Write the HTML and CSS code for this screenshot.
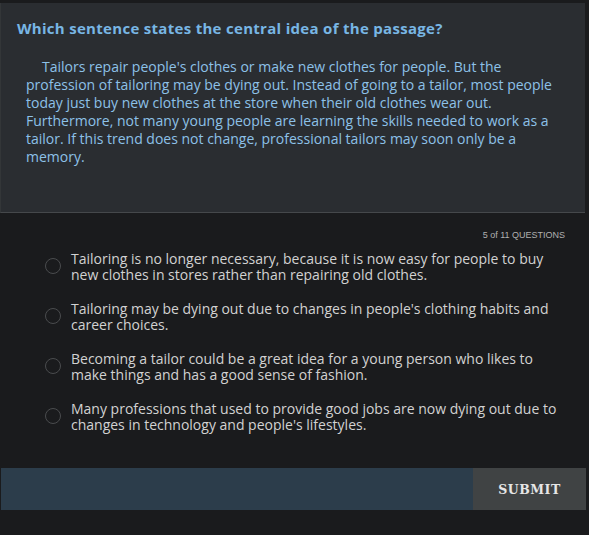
FILE: index.html
```html
<!DOCTYPE html>
<html>
<head>
<meta charset="utf-8">
<link rel="stylesheet" href="styles.css">
</head>
<body>
<div class="page">
  <section class="passage">
    <h1 class="title">Which sentence states the central idea of the passage?</h1>
    <p class="text">Tailors repair people's clothes or make new clothes for people. But the profession of tailoring may be dying out. Instead of going to a tailor, most people today just buy new clothes at the store when their old clothes wear out. Furthermore, not many young people are learning the skills needed to work as a tailor. If this trend does not change, professional tailors may soon only be a memory.</p>
  </section>
  <div class="counter">5 of 11 QUESTIONS</div>
  <ul class="options">
    <li class="option"><span class="radio"></span><span class="label">Tailoring is no longer necessary, because it is now easy for people to buy new clothes in stores rather than repairing old clothes.</span></li>
    <li class="option"><span class="radio"></span><span class="label">Tailoring may be dying out due to changes in people's clothing habits and career choices.</span></li>
    <li class="option"><span class="radio"></span><span class="label">Becoming a tailor could be a great idea for a young person who likes to make things and has a good sense of fashion.</span></li>
    <li class="option"><span class="radio"></span><span class="label">Many professions that used to provide good jobs are now dying out due to changes in technology and people's lifestyles.</span></li>
  </ul>
  <div class="bar">
    <div class="bar-fill"></div>
    <button class="submit">SUBMIT</button>
  </div>
</div>
</body>
</html>
```
FILE: styles.css
```css
html, body {
  margin: 0;
  padding: 0;
  background: #1a1b1d;
  height: 100%;
}
.page {
  width: 589px;
  height: 535px;
  padding-top: 3px;
  box-sizing: border-box;
  font-family: "Open Sans", "Noto Sans", sans-serif;
}
.passage {
  width: 585px;
  height: 210px;
  box-sizing: border-box;
  background: #2a2d31;
  border-left: 1px solid #333638;
  border-bottom: 1px solid #45484b;
  padding: 15px 16px 0 16px;
}
.title {
  margin: 0;
  font-family: "Open Sans", sans-serif;
  font-weight: 700;
  font-size: 15px;
  letter-spacing: 0.3px;
  color: #78b6e4;
  line-height: 20px;
}
.text {
  margin: 20px 0 0 9px;
  font-size: 14px;
  line-height: 18px;
  color: #8dc1e8;
  text-indent: 16px;
  width: 538px;
}
.counter {
  text-align: right;
  padding: 16px 24px 0 0;
  font-family: "Liberation Sans", Arial, sans-serif;
  font-size: 9px;
  color: #b0b0b0;
  line-height: 12px;
}
.options {
  list-style: none;
  margin: 10px 0 0 0;
  padding: 0 0 0 45px;
}
.option {
  display: flex;
  align-items: flex-start;
  height: 50px;
}
.radio {
  flex: none;
  width: 14px;
  height: 14px;
  border: 1.5px solid #4a4c4e;
  border-radius: 50%;
  margin-top: 7px;
  margin-right: 10px;
}
.label {
  font-size: 14px;
  line-height: 16px;
  color: #d2d2d2;
  width: 495px;
}
.bar {
  display: flex;
  margin: 17px 0 0 1px;
  width: 585px;
  height: 42px;
}
.bar-fill {
  flex: 1;
  background: #2c3d4b;
}
.submit {
  width: 113px;
  border: 0;
  background: #404344;
  color: #e6e6e6;
  font-family: "DejaVu Serif", "Liberation Serif", serif;
  font-weight: bold;
  font-size: 12.5px;
  letter-spacing: 0.5px;
  padding: 0;
}
```
